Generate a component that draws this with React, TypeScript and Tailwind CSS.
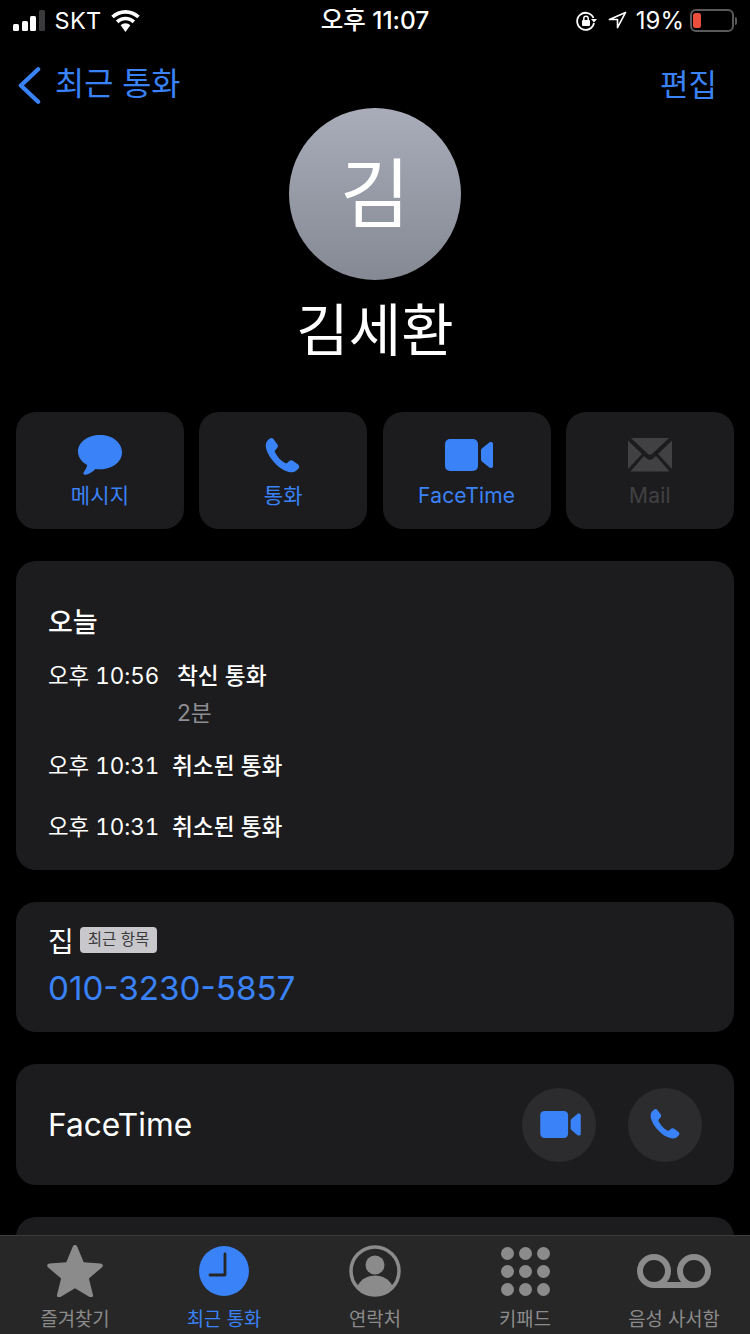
import type { ReactNode } from "react";

const PHONE_PATH =
  "M6.2 1.3c.9-.7 2-.5 2.7.4l2.3 3.1c.6.8.5 1.8-.1 2.5L9.9 8.6c-.4.4-.5 1-.2 1.5 1.5 3 3.6 5.3 6.6 7 .5.3 1.1.2 1.5-.2l1.2-1.1c.7-.6 1.700-.7 2.500-.1l3 2.200c1 .7 1.200 1.900.5 2.800-1.300 1.700-3 2.600-5 2.400-3.600-.4-7.400-2.700-10.600-6.200C6.400 13.600 4 9.600 3.700 6.200 3.500 4.200 4.400 2.500 6.200 1.300z";

function PhoneIcon({ className }: { className: string }) {
  return (
    <svg viewBox="3.6 0.8 22.6 23.4" className={className} fill="currentColor">
      <path d={PHONE_PATH} />
    </svg>
  );
}

function VideoIcon({ className }: { className: string }) {
  return (
    <svg viewBox="0 0 48 32" className={className} fill="currentColor">
      <rect x="0" y="0" width="33" height="32" rx="5" />
      <path d="M36 11.500c0-.8.3-1.400.9-1.900l7.400-6.200c1.200-1 3.700-.4 3.700 1.400v22.400c0 1.800-2.500 2.400-3.700 1.400l-7.400-6.200c-.6-.5-.9-1.100-.9-1.900z" />
    </svg>
  );
}

function StatusBar() {
  return (
    <div className="flex h-10 shrink-0 items-center justify-between pl-[13px] pr-[13px] pt-[1px] text-white">
      <div className="flex w-[200px] items-center">
        <div className="flex items-end gap-[2.500px]">
          <span className="h-[7px] w-[6px] rounded-[1.500px] bg-white" />
          <span className="h-[10px] w-[6px] rounded-[1.500px] bg-white" />
          <span className="h-[15px] w-[6px] rounded-[1.500px] bg-white" />
          <span className="h-[21px] w-[6px] rounded-[1.500px] bg-[#3a3a3c]" />
        </div>
        <span className="ml-[10px] text-[23.500px] leading-none tracking-[0.3px]">SKT</span>
        <svg viewBox="1.800 0.800 26.400 20.400" className="ml-[10px] h-[22px] w-[29px]" fill="white">
          <path d="M15 4.200c4.200 0 8 1.600 10.900 4.300l2.300-2.400C24.700 2.800 20.100.8 15 .8S5.300 2.800 1.800 6.100l2.300 2.400C7 5.800 10.800 4.200 15 4.200z" />
          <path d="M15 10.400c2.500 0 4.800 1 6.600 2.600l2.300-2.400C21.500 8.400 18.400 7 15 7s-6.500 1.400-8.900 3.600l2.300 2.400c1.800-1.600 4.100-2.600 6.600-2.600z" />
          <path d="M15 13.200c-1.700 0-3.300.7-4.500 1.800L15 21.200l4.500-6.200c-1.200-1.100-2.800-1.800-4.500-1.800z" />
        </svg>
      </div>
      <span className="text-[24.500px] font-medium leading-none">오후 11:07</span>
      <div className="flex w-[200px] items-center justify-end">
        <svg viewBox="0 0 22 22" className="h-[22px] w-[22px]" fill="none" stroke="white" strokeWidth="1.800">
          <path d="M18.500 8A8.500 8.500 0 1 0 19 13" />
          <path d="M16 9h6l-3 3.500z" fill="white" stroke="none" />
          <rect x="7" y="10" width="8" height="6" rx="1" fill="white" stroke="none" />
          <path d="M8.800 10V8.500a2.200 2.200 0 0 1 4.400 0V10" strokeWidth="1.500" />
        </svg>
        <svg viewBox="0 0 20 20" className="ml-[11px] h-[19px] w-[19px]" fill="none" stroke="white" strokeWidth="1.700" strokeLinejoin="round">
          <path d="M18.500 1.500L1.500 9h8.500v8.500z" />
        </svg>
        <span className="ml-[9px] text-[24px] leading-none">19%</span>
        <div className="ml-[6px] flex h-[23px] w-[44px] items-center rounded-[6px] border-2 border-[#5a5a5c] pl-[1px]">
          <span className="h-[15px] w-[8px] rounded-[2.500px] bg-[#eb4e3d]" />
        </div>
        <span className="ml-[1px] h-[8px] w-[2px] rounded-r-sm bg-[#5a5a5c]" />
      </div>
    </div>
  );
}

function ActionButton({ label, icon, disabled }: { label: string; icon: ReactNode; disabled?: boolean }) {
  return (
    <div
      className={`flex h-[117px] flex-col items-center rounded-[20px] bg-[#1c1c1e] ${
        disabled ? "text-[#414143]" : "text-[#3a82f7]"
      }`}
    >
      <div className="flex h-[64px] w-full items-end justify-center">{icon}</div>
      <span className="mt-[7px] text-[21px] leading-[26px] tracking-[0.2px]">{label}</span>
    </div>
  );
}

function CallRow({ time, label, duration, gap }: { time: string; label: string; duration?: string; gap: string }) {
  return (
    <div className="flex text-[22.700px] leading-[30px] text-white">
      <span className={`text-[22.400px] tabular-nums ${gap}`}>{time}</span>
      <div>
        <p className="font-medium">{label}</p>
        {duration && <p className="mt-[7px] text-[#8e8e93]">{duration}</p>}
      </div>
    </div>
  );
}

function TabItem({
  label,
  icon,
  active,
  width,
}: {
  label: string;
  icon: ReactNode;
  active?: boolean;
  width: string;
}) {
  return (
    <div className={`flex flex-col items-center ${width} ${active ? "text-[#3a82f7]" : "text-[#8b8b8b]"}`}>
      <div className="flex h-[54px] w-full items-center justify-center">{icon}</div>
      <span className="mt-[9px] text-[18.800px] leading-[26px]">{label}</span>
    </div>
  );
}

function TabBar() {
  return (
    <div className="absolute inset-x-0 bottom-0 flex h-[99px] border-t border-[#3c3c3c] bg-[#272727] pt-[8px]">
      <TabItem
        width="w-[150px]"
        label="즐겨찾기"
        icon={
          <svg viewBox="0 0 56 52" className="h-[52px] w-[56px]" fill="currentColor">
            <path d="M28 0c1 0 1.800.6 2.300 1.800l6.400 15.500 16.700 1.200c2.400.2 3.300 2.400 1.400 4L41.900 33.400l4 16.200c.6 2.300-1.400 3.600-3.300 2.400L28 43.200 13.400 52c-1.900 1.200-3.900-.1-3.300-2.400l4-16.200L1.200 22.500c-1.900-1.600-1-3.800 1.400-4l16.700-1.200 6.400-15.500C26.200.6 27 0 28 0z" />
          </svg>
        }
      />
      <TabItem
        active
        width="w-[148px]"
        label="최근 통화"
        icon={
          <svg viewBox="0 0 50 50" className="h-[50px] w-[50px]">
            <circle cx="25" cy="25" r="25" fill="currentColor" />
            <path d="M26 8v21H11" fill="none" stroke="#272727" strokeWidth="2.800" strokeLinecap="round" strokeLinejoin="round" />
          </svg>
        }
      />
      <TabItem
        width="w-[154px]"
        label="연락처"
        icon={
          <svg viewBox="0 0 52 52" className="h-[52px] w-[52px]">
            <circle cx="26" cy="26" r="24" fill="none" stroke="currentColor" strokeWidth="3.500" />
            <circle cx="26" cy="20" r="9.500" fill="currentColor" />
            <path d="M8.500 41c3.500-7 10-10.500 17.500-10.500S40 34 43.500 41C39 46.500 33 49 26 49S13 46.500 8.500 41z" fill="currentColor" />
          </svg>
        }
      />
      <TabItem
        width="w-[146px]"
        label="키패드"
        icon={
          <div className="grid grid-cols-3 gap-x-[5px] gap-y-[5px]">
            {Array.from({ length: 9 }, (_, i) => (
              <span key={i} className="h-[13px] w-[13px] rounded-full bg-current" />
            ))}
          </div>
        }
      />
      <TabItem
        width="w-[152px]"
        label="음성 사서함"
        icon={
          <svg viewBox="0 0 74 34" className="h-[34px] w-[74px]" fill="none" stroke="currentColor" strokeWidth="6">
            <circle cx="17" cy="17" r="14" />
            <circle cx="57" cy="17" r="14" />
            <path d="M17 31h40" />
          </svg>
        }
      />
    </div>
  );
}

export default function App() {
  return (
    <div
      className="relative flex h-[1334px] w-[750px] flex-col overflow-hidden bg-black"
      style={{ fontFamily: 'Inter, "Noto Sans CJK KR", sans-serif' }}
    >
      <StatusBar />

      {/* Nav bar */}
      <div className="flex h-[68px] shrink-0 items-center justify-between pl-[18px] pr-[33px] pt-[20px] text-[#3a82f7]">
        <div className="flex items-center">
          <svg viewBox="0 0 24 40" className="mr-[1px] mt-[2px] h-[39px] w-[23px]" fill="none" stroke="currentColor" strokeWidth="4.500" strokeLinecap="round" strokeLinejoin="round">
            <path d="M21 3L3 20l18 17" />
          </svg>
          <span className="ml-[13px] text-[31.700px] leading-none">최근 통화</span>
        </div>
        <span className="text-[31px] leading-none">편집</span>
      </div>

      {/* Contact header */}
      <div className="flex shrink-0 flex-col items-center">
        <div className="flex h-[172px] w-[172px] items-center justify-center rounded-full bg-gradient-to-b from-[#a9adb9] to-[#858994] text-[76px] leading-none text-white">
          김
        </div>
        <h1 className="mt-[16px] text-[57px] font-normal leading-[70px] text-white">김세환</h1>
      </div>

      {/* Action buttons */}
      <div className="mt-[46px] grid grid-cols-4 gap-x-[15.300px] px-4">
        <ActionButton
          label="메시지"
          icon={
            <svg viewBox="0 0 44 41" className="h-[41px] w-[44px]" fill="currentColor">
              <path d="M22 0C9.800 0 0 7.300 0 16.500c0 5.600 3.700 10.600 9.200 13.500-.5 2.800-2.500 5.900-3.600 7.600-.7 1 .2 2.400 1.400 2.200 3.900-.6 8-2.900 10.400-5.900 1.500.3 3 .4 4.600.4 12.200 0 22-7.300 22-16.800C44 7.300 34.200 0 22 0z" />
            </svg>
          }
        />
        <ActionButton label="통화" icon={<PhoneIcon className="mb-[2px] h-[36px] w-[36px]" />} />
        <ActionButton label="FaceTime" icon={<VideoIcon className="mb-[5px] ml-[4px] h-[32px] w-[48px]" />} />
        <ActionButton
          disabled
          label="Mail"
          icon={
            <svg viewBox="0 0 44 34" className="mb-[4px] h-[34px] w-[44px]" fill="currentColor">
              <path d="M3 0h38L24 16c-1.200 1-2.800 1-4 0z" />
              <path d="M0 2.500v28.500l14-15z" />
              <path d="M44 2.500v28.500l-14-15z" />
              <path d="M2.500 33.500h39L28 18l-2.800 2.500c-1.800 1.600-4.600 1.600-6.400 0L16 18z" />
            </svg>
          }
        />
      </div>

      {/* Call history */}
      <div className="mx-4 mt-8 h-[309px] shrink-0 rounded-[20px] bg-[#1c1c1e] px-8 pt-[44px]">
        <p className="text-[27px] font-medium leading-[36px] text-white">오늘</p>
        <div className="mt-[20px]">
          <CallRow time="오후 10:56" label="착신 통화" duration="2분" gap="w-[129px]" />
          <div className="mt-[23px]">
            <CallRow time="오후 10:31" label="취소된 통화" gap="w-[124px]" />
          </div>
          <div className="mt-[31px]">
            <CallRow time="오후 10:31" label="취소된 통화" gap="w-[124px]" />
          </div>
        </div>
      </div>

      {/* Phone number */}
      <div className="mx-4 mt-8 h-[130px] shrink-0 rounded-[20px] bg-[#1c1c1e] px-8 pt-[20px]">
        <div className="flex items-start">
          <span className="text-[28px] leading-[40px] text-white">집</span>
          <span className="ml-[6px] mt-[5px] rounded-[4px] bg-[#c7c7cc] px-[8px] text-[15.500px] leading-[26px] text-[#3a3a3c]">
            최근 항목
          </span>
        </div>
        <p className="mt-[4px] text-[33.200px] leading-[44px] text-[#3a82f7]">010-3230-5857</p>
      </div>

      {/* FaceTime row */}
      <div className="mx-4 mt-8 flex h-[121px] shrink-0 items-center justify-between rounded-[20px] bg-[#1c1c1e] pl-8 pr-8">
        <span className="text-[31.700px] text-white">FaceTime</span>
        <div className="flex gap-8 text-[#3a82f7]">
          <div className="flex h-[74px] w-[74px] items-center justify-center rounded-full bg-[#2c2c2e]">
            <VideoIcon className="ml-[3px] h-[27px] w-[41px]" />
          </div>
          <div className="flex h-[74px] w-[74px] items-center justify-center rounded-full bg-[#2c2c2e]">
            <PhoneIcon className="h-[31px] w-[31px]" />
          </div>
        </div>
      </div>

      {/* Next card, cut off by the tab bar */}
      <div className="mx-4 mt-8 h-[120px] shrink-0 rounded-[20px] bg-[#1c1c1e]" />

      <TabBar />
    </div>
  );
}
